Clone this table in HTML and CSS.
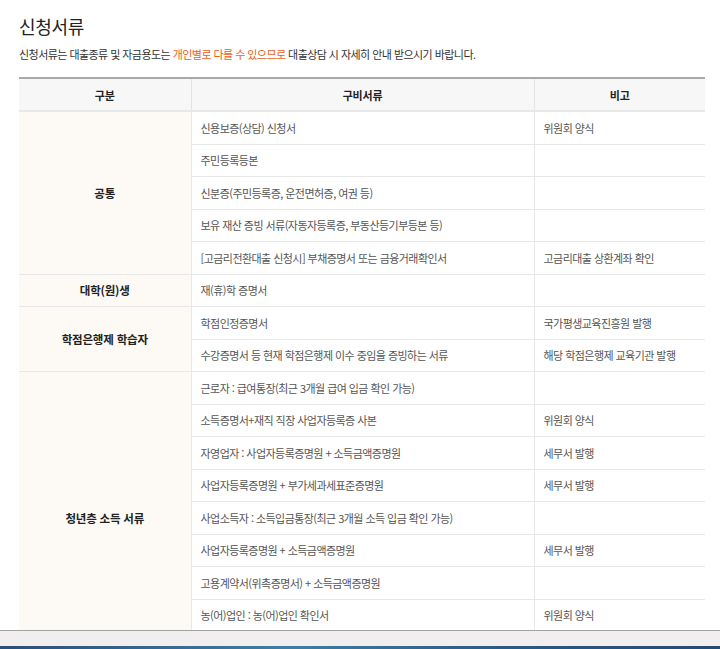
FILE: index.html
```html
<!DOCTYPE html>
<html lang="ko">
<head>
<meta charset="utf-8">
<link rel="stylesheet" href="styles.css">
</head>
<body>
<div class="frame">
  <div class="viewport">
    <h2 class="title">신청서류</h2>
    <p class="desc">신청서류는 대출종류 및 자금용도는 <span class="hl">개인별로 다를 수 있으므로</span> 대출상담 시 자세히 안내 받으시기 바랍니다.</p>
    <table class="docs">
      <colgroup><col class="c1"><col class="c2"><col class="c3"></colgroup>
      <thead>
        <tr><th>구분</th><th>구비서류</th><th>비고</th></tr>
      </thead>
      <tbody>
        <tr><td class="cat" rowspan="5">공통</td><td>신용보증(상담) 신청서</td><td>위원회 양식</td></tr>
        <tr><td>주민등록등본</td><td></td></tr>
        <tr><td>신분증(주민등록증, 운전면허증, 여권 등)</td><td></td></tr>
        <tr><td>보유 재산 증빙 서류(자동자등록증, 부동산등기부등본 등)</td><td></td></tr>
        <tr><td>[고금리전환대출 신청시] 부채증명서 또는 금융거래확인서</td><td>고금리대출 상환계좌 확인</td></tr>
        <tr><td class="cat">대학(원)생</td><td>재(휴)학 증명서</td><td></td></tr>
        <tr><td class="cat" rowspan="2">학점은행제 학습자</td><td>학점인정증명서</td><td>국가평생교육진흥원 발행</td></tr>
        <tr><td>수강증명서 등 현재 학점은행제 이수 중임을 증빙하는 서류</td><td>해당 학점은행제 교육기관 발행</td></tr>
        <tr><td class="cat" rowspan="9">청년층 소득 서류</td><td>근로자 : 급여통장(최근 3개월 급여 입금 확인 가능)</td><td></td></tr>
        <tr><td>소득증명서+재직 직장 사업자등록증 사본</td><td>위원회 양식</td></tr>
        <tr><td>자영업자 : 사업자등록증명원 + 소득금액증명원</td><td>세무서 발행</td></tr>
        <tr><td>사업자등록증명원 + 부가세과세표준증명원</td><td>세무서 발행</td></tr>
        <tr><td>사업소득자 : 소득입금통장(최근 3개월 소득 입금 확인 가능)</td><td></td></tr>
        <tr><td>사업자등록증명원 + 소득금액증명원</td><td>세무서 발행</td></tr>
        <tr><td>고용계약서(위촉증명서) + 소득금액증명원</td><td></td></tr>
        <tr><td>농(어)업인 : 농(어)업인 확인서</td><td>위원회 양식</td></tr>
        <tr><td></td><td></td></tr>
      </tbody>
    </table>
  </div>
  <div class="hbar"></div>
  <div class="edge"></div>
</div>
</body>
</html>
```

FILE: styles.css
```css
html, body {
  margin: 0;
  padding: 0;
  background: #fff;
}
body {
  font-family: "Noto Sans CJK KR", "Noto Sans", sans-serif;
  color: #555;
}
.frame {
  height: 649px;
  display: flex;
  flex-direction: column;
}
.viewport {
  flex: 1;
  overflow: hidden;
  padding: 13px 0 0 19px;
}
.title {
  margin: 0;
  font-size: 18px;
  line-height: 26px;
  font-weight: 400;
  color: #222;
  letter-spacing: -0.3px;
}
.desc {
  margin: 7px 0 0;
  font-size: 11px;
  line-height: 16px;
  color: #333;
  letter-spacing: -0.55px;
}
.hl {
  color: #e8601c;
}
.docs {
  margin-top: 15px;
  width: 686px;
  table-layout: fixed;
  border-collapse: collapse;
  border-top: 2px solid #a9a9a9;
  font-size: 11px;
  letter-spacing: -0.55px;
}
.c1 { width: 172px; }
.c2 { width: 343px; }
.c3 { width: 171px; }
.docs th {
  height: 31px;
  background: #f7f7f7;
  color: #222;
  font-weight: 700;
  border-left: 1px solid #e4e4e4;
  border-bottom: 2px solid #e8e8e8;
  padding: 0;
  letter-spacing: -0.2px;
}
.docs th:first-child { border-left: none; }
.docs td {
  height: 31.5px;
  padding: 0 9px;
  border-left: 1px solid #e8e8e8;
  border-bottom: 1px solid #e8e8e8;
  vertical-align: middle;
  white-space: nowrap;
  color: #555;
}
.docs td.cat {
  border-left: none;
  background: #fdfaf5;
  color: #222;
  font-weight: 700;
  text-align: center;
  font-size: 11.5px;
  letter-spacing: -0.2px;
}
.hbar {
  height: 15px;
  flex: none;
  border-top: 1px solid #a3a3a3;
  background: #f0eeee;
}
.edge {
  height: 3px;
  flex: none;
  background: linear-gradient(to right, #2a4f78, #3d7ea8 40%, #2a5a86 70%, #244a72);
}
```
